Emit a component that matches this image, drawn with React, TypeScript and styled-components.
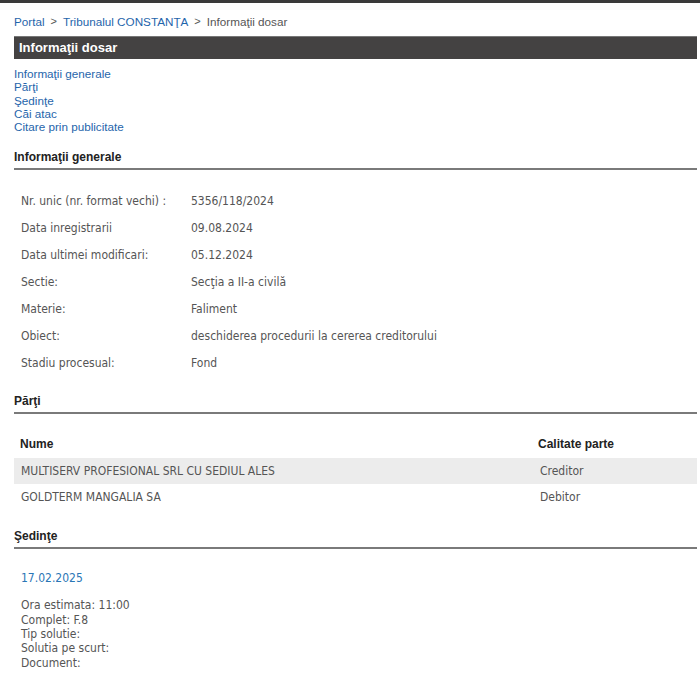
import React from "react";
import styled, { createGlobalStyle } from "styled-components";

const colors = {
	link: "#1f65ab",
	text: "#555555",
	heading: "#222222",
	bar: "#444242",
	rule: "#7a7a7a",
	stripe: "#ececec",
};

const tahoma = "\"DejaVu Sans Condensed\", \"DejaVu Sans\", sans-serif";

const GlobalStyle = createGlobalStyle`
	html, body {
		margin: 0;
		padding: 0;
		background: #ffffff;
	}
	body {
		font-family: "Liberation Sans", Arial, sans-serif;
		font-size: 12px;
	}
`;

const Styled = {
	TopBar: styled("div")({
		height: "3px",
		background: "#3a3a3a",
	}),
	Page: styled("div")({
		padding: "0 3px 20px 14px",
	}),
	Breadcrumb: styled("div")({
		display: "flex",
		alignItems: "center",
		gap: "5px",
		paddingTop: "8px",
		height: "20px",
		fontSize: "11.7px",
		color: "#555",
	}),
	Crumb: styled("a")({
		color: colors.link,
		textDecoration: "none",
	}),
	Sep: styled("span")({
		color: "#555",
		fontSize: "11px",
		padding: "0 1px",
	}),
	TitleBar: styled("h1")({
		margin: "5px 0 0",
		height: "22px",
		lineHeight: "22px",
		background: colors.bar,
		borderTop: "1px solid #777",
		color: "#ffffff",
		fontSize: "13px",
		fontWeight: "bold",
		paddingLeft: "5px",
	}),
	Nav: styled("nav")({
		display: "flex",
		flexDirection: "column",
		paddingTop: "8px",
		lineHeight: "13.3px",
	}),
	NavLink: styled("a")({
		color: colors.link,
		textDecoration: "none",
		fontSize: "11.7px",
	}),
	SectionTitle: styled("h2")<{ $top: number }>(({ $top }) => ({
		margin: `${$top}px 0 0`,
		paddingBottom: "4px",
		borderBottom: `2px solid ${colors.rule}`,
		fontSize: "12px",
		fontWeight: "bold",
		color: colors.heading,
	})),
	InfoTable: styled("div")({
		display: "grid",
		gridTemplateColumns: "170px 1fr",
		gridAutoRows: "27px",
		alignItems: "center",
		padding: "17px 0 0 7px",
		fontFamily: tahoma,
		fontSize: "12px",
		color: colors.text,
	}),
	PartiesHead: styled("div")({
		display: "grid",
		gridTemplateColumns: "518px 1fr",
		alignItems: "center",
		height: "44px",
		padding: "16px 0 0 6px",
		boxSizing: "border-box",
		fontSize: "12px",
		fontWeight: "bold",
		color: colors.heading,
	}),
	PartyRow: styled("div")<{ $shaded?: boolean }>(({ $shaded }) => ({
		display: "grid",
		gridTemplateColumns: "519px 1fr",
		alignItems: "center",
		height: "26px",
		paddingLeft: "7px",
		background: $shaded ? colors.stripe : "transparent",
		fontFamily: tahoma,
		fontSize: "12px",
		color: colors.text,
	})),
	Hearing: styled("div")({
		padding: "22px 0 0 7px",
		fontFamily: tahoma,
		fontSize: "12px",
		color: colors.text,
	}),
	HearingDate: styled("div")({
		color: "#2a76b6",
		marginBottom: "13px",
	}),
	HearingLine: styled("div")({
		lineHeight: "14.3px",
	}),
};

const info: [string, string][] = [
	["Nr. unic (nr. format vechi) :", "5356/118/2024"],
	["Data inregistrarii", "09.08.2024"],
	["Data ultimei modificari:", "05.12.2024"],
	["Sectie:", "Secţia a II-a civilă"],
	["Materie:", "Faliment"],
	["Obiect:", "deschiderea procedurii la cererea creditorului"],
	["Stadiu procesual:", "Fond"],
];

const parties: [string, string][] = [
	["MULTISERV PROFESIONAL SRL CU SEDIUL ALES", "Creditor"],
	["GOLDTERM MANGALIA SA", "Debitor"],
];

const hearingLines = [
	"Ora estimata: 11:00",
	"Complet: F.8",
	"Tip solutie:",
	"Solutia pe scurt:",
	"Document:",
];

export default function App() {
	return (
		<>
			<GlobalStyle />
			<Styled.TopBar />
			<Styled.Page>
				<Styled.Breadcrumb>
					<Styled.Crumb href="#">Portal</Styled.Crumb>
					<Styled.Sep>&gt;</Styled.Sep>
					<Styled.Crumb href="#">Tribunalul CONSTANŢA</Styled.Crumb>
					<Styled.Sep>&gt;</Styled.Sep>
					<span>Informaţii dosar</span>
				</Styled.Breadcrumb>
				<Styled.TitleBar>Informaţii dosar</Styled.TitleBar>
				<Styled.Nav>
					<Styled.NavLink href="#">Informaţii generale</Styled.NavLink>
					<Styled.NavLink href="#">Părţi</Styled.NavLink>
					<Styled.NavLink href="#">Şedinţe</Styled.NavLink>
					<Styled.NavLink href="#">Căi atac</Styled.NavLink>
					<Styled.NavLink href="#">Citare prin publicitate</Styled.NavLink>
				</Styled.Nav>

				<Styled.SectionTitle $top={17}>Informaţii generale</Styled.SectionTitle>
				<Styled.InfoTable>
					{info.map(([label, value]) => (
						<React.Fragment key={label}>
							<span>{label}</span>
							<span>{value}</span>
						</React.Fragment>
					))}
				</Styled.InfoTable>

				<Styled.SectionTitle $top={18}>Părţi</Styled.SectionTitle>
				<Styled.PartiesHead>
					<span>Nume</span>
					<span>Calitate parte</span>
				</Styled.PartiesHead>
				{parties.map(([name, role], i) => (
					<Styled.PartyRow key={name} $shaded={i === 0}>
						<span>{name}</span>
						<span>{role}</span>
					</Styled.PartyRow>
				))}

				<Styled.SectionTitle $top={19}>Şedinţe</Styled.SectionTitle>
				<Styled.Hearing>
					<Styled.HearingDate>17.02.2025</Styled.HearingDate>
					{hearingLines.map((line) => (
						<Styled.HearingLine key={line}>{line}</Styled.HearingLine>
					))}
				</Styled.Hearing>
			</Styled.Page>
		</>
	);
}
